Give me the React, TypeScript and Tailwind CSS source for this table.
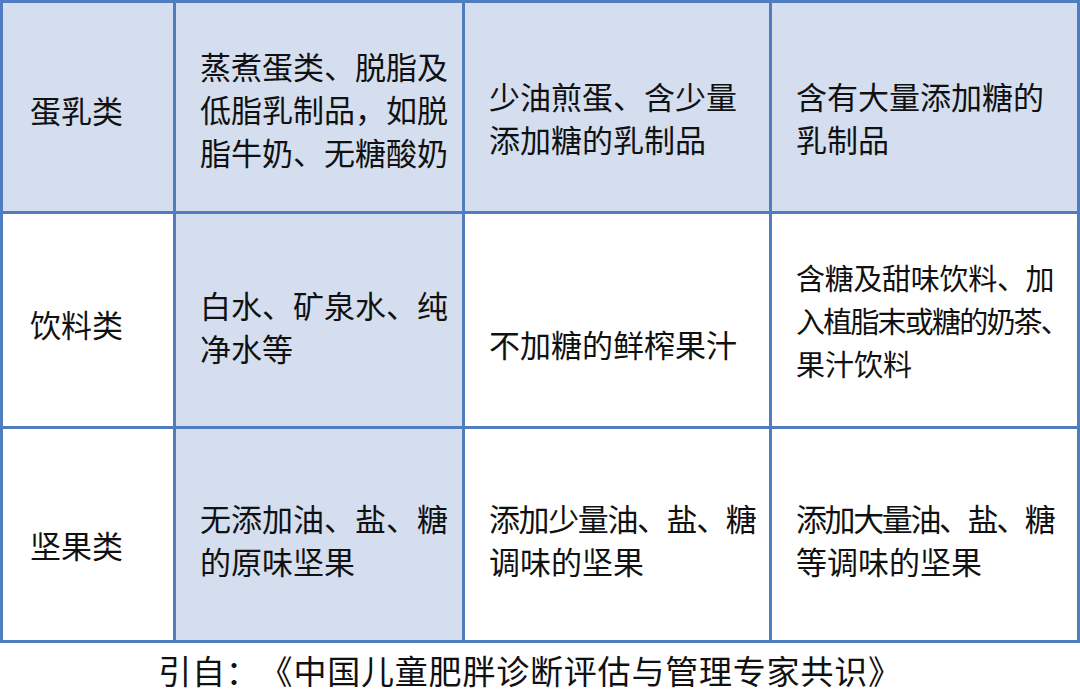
import React from "react";

type Cell = { lines: string[]; blue: boolean; pt?: string; lc?: string[] };

const font = { fontFamily: '"Noto Sans CJK SC", "Noto Sans", sans-serif' };

const rows: { h: string; cells: Cell[] }[] = [
  {
    h: "h-[208px]",
    cells: [
      { lines: ["蛋乳类"], blue: true, pt: "pt-[4px]" },
      { lines: ["蒸煮蛋类、脱脂及", "低脂乳制品，如脱", "脂牛奶、无糖酸奶"], blue: true, pt: "pt-[2px]" },
      { lines: ["少油煎蛋、含少量", "添加糖的乳制品"], blue: true, pt: "pt-[20px]" },
      { lines: ["含有大量添加糖的", "乳制品"], blue: true, pt: "pt-[20px]" },
    ],
  },
  {
    h: "h-[212px]",
    cells: [
      { lines: ["饮料类"], blue: false, pt: "pt-[6px]" },
      { lines: ["白水、矿泉水、纯", "净水等"], blue: true, pt: "pt-[12px]" },
      { lines: ["不加糖的鲜榨果汁"], blue: false, pt: "pt-[46px]" },
      {
        lines: ["含糖及甜味饮料、加", "入植脂末或糖的奶茶、", "果汁饮料"],
        blue: false,
        pt: "pt-[0px]",
        lc: ["text-[29px] tracking-[-0.3px]", "text-[29px] tracking-[-1.8px]", "text-[29px]"],
      },
    ],
  },
  {
    h: "h-[211px]",
    cells: [
      { lines: ["坚果类"], blue: false, pt: "pt-[20px]" },
      { lines: ["无添加油、盐、糖", "的原味坚果"], blue: true, pt: "pt-[8px]" },
      {
        lines: ["添加少量油、盐、糖", "调味的坚果"],
        blue: false,
        pt: "pt-[8px]",
        lc: ["tracking-[-1.4px]", ""],
      },
      {
        lines: ["添加大量油、盐、糖", "等调味的坚果"],
        blue: false,
        pt: "pt-[8px]",
        lc: ["tracking-[-2.4px]", ""],
      },
    ],
  },
];

export default function App() {
  return (
    <div className="w-[1080px] h-[697px] bg-white overflow-hidden" style={font}>
      <div className="grid grid-cols-[170px_286px_304px_305px] gap-[3px] p-[3px] bg-[#507cc0] w-[1080px]">
        {rows.map((r, ri) =>
          r.cells.map((c, ci) => (
            <div
              key={`${ri}-${ci}`}
              className={`${r.h} ${c.blue ? "bg-[#d4deee]" : "bg-white"} flex flex-col justify-center ${c.pt ?? ""} ${
                ci === 0 ? "pl-[27px]" : "pl-[24px]"
              } text-[31px] leading-[43px] text-[#111111] [text-spacing-trim:space-all]`}
            >
              {c.lines.map((l, li) => (
                <div key={li} className={`whitespace-nowrap ${c.lc ? c.lc[li] : ""}`}>
                  {l}
                </div>
              ))}
            </div>
          ))
        )}
      </div>
      <div className="h-[54px] flex items-center justify-center pr-[20px]">
        <span className="text-[33px] leading-[40px] text-[#111111] whitespace-nowrap [text-spacing-trim:space-all] tracking-[0.8px]">
          引自：《中国儿童肥胖诊断评估与管理专家共识》
        </span>
      </div>
    </div>
  );
}
